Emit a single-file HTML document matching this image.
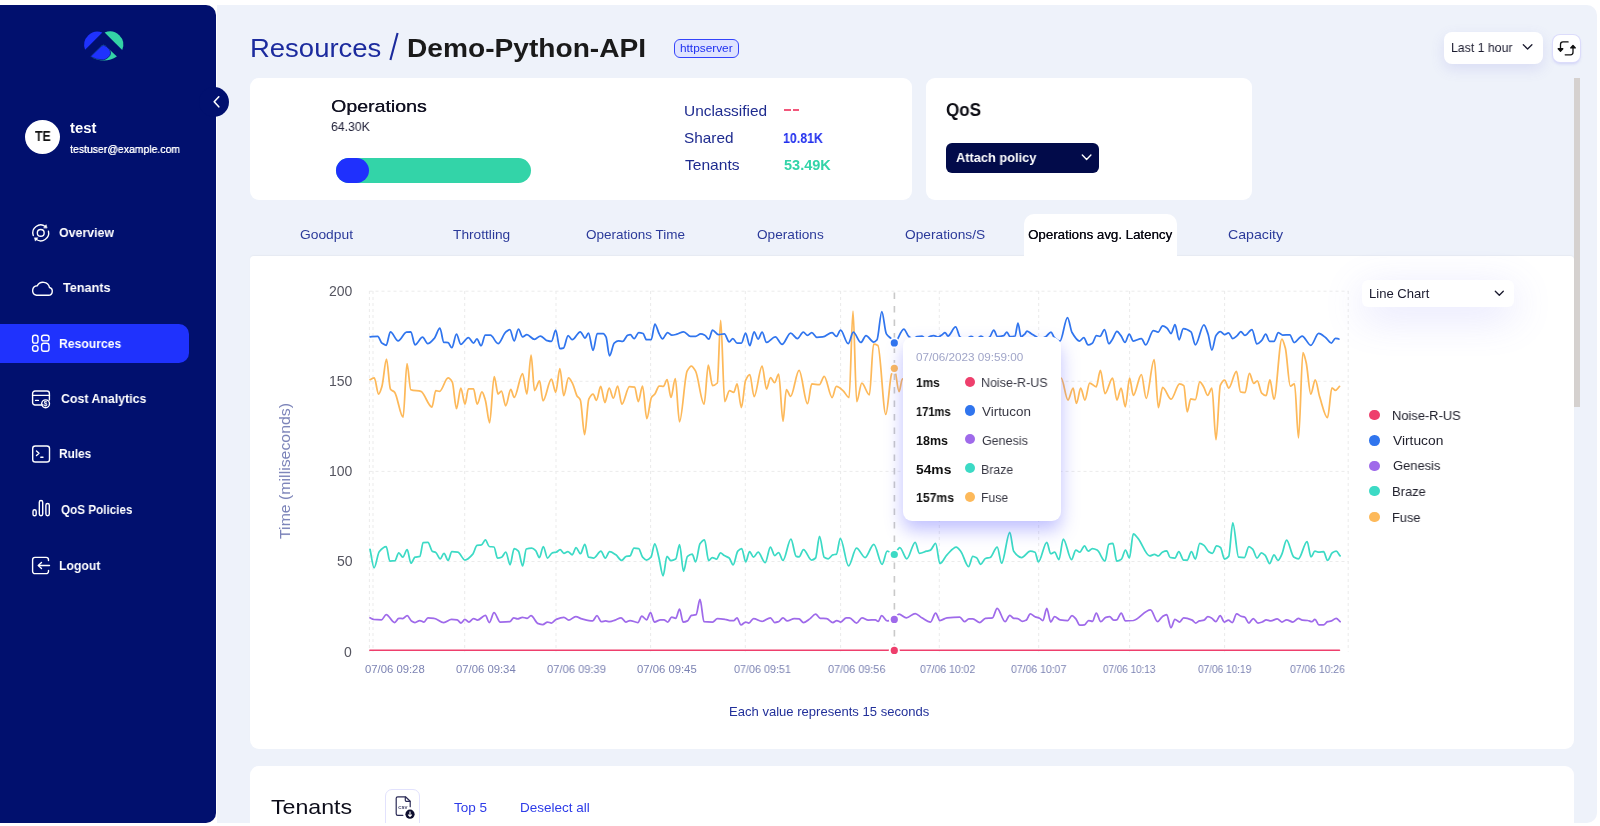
<!DOCTYPE html>
<html><head><meta charset="utf-8">
<style>
html,body{margin:0;padding:0;width:1600px;height:826px;overflow:hidden;background:#fff;}
body{position:relative;font-family:"Liberation Sans", sans-serif;}
.t{position:absolute;white-space:nowrap;transform-origin:0 0;will-change:transform;}
.b{position:absolute;}
svg.b{overflow:visible;}
</style></head><body>
<div class="b" style="left:217.00px;top:5.00px;width:1380.00px;height:817.50px;background:#eef2fa;border-radius:0 10px 10px 0;"></div>
<div class="b" style="left:0.00px;top:5.00px;width:216.00px;height:817.50px;background:#01106e;border-radius:0 10px 10px 0;"></div>
<div class="b" style="left:199.00px;top:87.00px;width:30.00px;height:30.00px;background:#01106e;border-radius:50%;"></div>
<svg class="b" style="left:0;top:0" width="1600" height="826" viewBox="0 0 1600 826"><path d="M218.8,96.8 L214.2,101.8 L218.8,106.8" fill="none" stroke="#fff" stroke-width="1.6" stroke-linecap="round" stroke-linejoin="round"/></svg>
<svg class="b" style="left:0;top:0" width="1600" height="826" viewBox="0 0 1600 826"><path d="M85.1,49.7 A13.3,13.3 0 0 1 102.4,32.6 Z" fill="#1f32fd"/><path d="M104.6,32.6 A13.3,13.3 0 0 1 122.2,49.9 Z" fill="#34d3a6"/><path d="M90.6,56.6 L101.9,45.4 Q103.5,44 105.1,45.4 L116.9,56.6 A23.5,23.5 0 0 1 90.6,56.6 Z" fill="#34d3a6"/><path d="M90.6,56.6 L101.3,46.2 Q103.5,44.2 106.3,46.4 L109.3,49.4 Q112.2,53.6 108.3,57.3 Q105.8,59.6 103.2,59.9 A23.5,23.5 0 0 1 90.6,56.6 Z" fill="#1f32fd" stroke="#01106e" stroke-width="0.7"/></svg>
<div class="b" style="left:25.00px;top:119.80px;width:35.00px;height:34.20px;background:#fff;border-radius:50%;"></div>
<span class="t" style="left:35.08px;top:129.00px;font-size:14.50px;line-height:14.50px;font-weight:bold;color:#111;transform:scaleX(0.8523);">TE</span>
<span class="t" style="left:69.75px;top:121.00px;font-size:14.00px;line-height:14.00px;font-weight:bold;color:#fff;transform:scaleX(1.0593);">test</span>
<span class="t" style="left:69.90px;top:144.00px;font-size:11.00px;line-height:11.00px;font-weight:normal;color:#fff;transform:scaleX(0.9500);text-shadow:0.25px 0 0 #fff;">testuser@example.com</span>
<div class="b" style="left:0.00px;top:324.00px;width:188.60px;height:38.50px;background:#1f32fd;border-radius:0 10px 10px 0;"></div>
<span class="t" style="left:58.90px;top:226.00px;font-size:13.50px;line-height:13.50px;font-weight:bold;color:#fff;transform:scaleX(0.9171);">Overview</span>
<span class="t" style="left:62.97px;top:281.00px;font-size:13.50px;line-height:13.50px;font-weight:bold;color:#fff;transform:scaleX(0.9364);">Tenants</span>
<span class="t" style="left:58.55px;top:337.00px;font-size:13.50px;line-height:13.50px;font-weight:bold;color:#fff;transform:scaleX(0.9019);">Resources</span>
<span class="t" style="left:60.81px;top:392.00px;font-size:13.50px;line-height:13.50px;font-weight:bold;color:#fff;transform:scaleX(0.9154);">Cost Analytics</span>
<span class="t" style="left:58.67px;top:447.00px;font-size:13.50px;line-height:13.50px;font-weight:bold;color:#fff;transform:scaleX(0.8764);">Rules</span>
<span class="t" style="left:61.03px;top:503.00px;font-size:13.50px;line-height:13.50px;font-weight:bold;color:#fff;transform:scaleX(0.8658);">QoS Policies</span>
<span class="t" style="left:58.65px;top:559.00px;font-size:13.50px;line-height:13.50px;font-weight:bold;color:#fff;transform:scaleX(0.9046);">Logout</span>
<svg class="b" style="left:0;top:0" width="1600" height="826" viewBox="0 0 1600 826">
<g fill="none" stroke="#fff" stroke-width="1.4" stroke-linecap="round" stroke-linejoin="round">
 <!-- overview -->
 <circle cx="40.75" cy="232.9" r="3.4"/>
 <path d="M33.28,235.47 A7.9,7.9 0 0 1 45.39,226.51"/>
 <path d="M48.45,231.12 A7.9,7.9 0 0 1 36.11,239.29"/>
 <path d="M47.01,227.68 L46.11,224.68 L43.87,227.75 Z" fill="#fff" stroke-width="0.6"/>
 <path d="M34.49,238.12 L35.39,241.12 L37.63,238.05 Z" fill="#fff" stroke-width="0.6"/>
 <!-- cloud -->
 <path d="M36.5,295.3 H48.5 A4,4 0 0 0 49.5,287.5 A6.6,6.6 0 0 0 37.2,285.8 A4.8,4.8 0 0 0 36.5,295.3 Z"/>
 <!-- resources -->
 <rect x="32.6" y="335.3" width="5.4" height="7.8" rx="2.2"/>
 <rect x="41.6" y="335.3" width="7.4" height="5.6" rx="2.2"/>
 <rect x="32.6" y="345.6" width="5.4" height="5.6" rx="2.2"/>
 <rect x="41.6" y="343.3" width="7.4" height="7.9" rx="2.2"/>
 <!-- cost -->
 <path d="M43,405 H35 A2.4,2.4 0 0 1 32.6,402.6 V393.4 A2.4,2.4 0 0 1 35,391 H47 A2.4,2.4 0 0 1 49.4,393.4 V400"/>
 <path d="M32.6,395.4 H49.4"/>
 <path d="M35.6,400.4 H38.4"/>
 <circle cx="45.6" cy="403.8" r="3.9"/>
 <!-- rules -->
 <rect x="32.7" y="446" width="16.8" height="16" rx="2.6"/>
 <path d="M36.5,451 L39,453.3 L36.5,455.6"/>
 <path d="M40.8,457.3 H43"/>
 <!-- qos -->
 <rect x="33" y="509.8" width="3.2" height="6" rx="1.6"/>
 <rect x="39.3" y="500.5" width="3.4" height="15.3" rx="1.7"/>
 <rect x="45.9" y="503.5" width="3.4" height="12.3" rx="1.7"/>
 <!-- logout -->
 <path d="M48.5,560.5 V559.8 A2.4,2.4 0 0 0 46.1,557.4 H35 A2.4,2.4 0 0 0 32.6,559.8 V571.2 A2.4,2.4 0 0 0 35,573.6 H46.1 A2.4,2.4 0 0 0 48.5,571.2 V570.5"/>
 <path d="M49.5,565.5 H38.5"/>
 <path d="M41.5,562.5 L38.3,565.5 L41.5,568.5"/>
</g>
<text x="45.6" y="406.3" font-family="Liberation Sans" font-size="6.5" font-weight="bold" fill="#fff" text-anchor="middle">$</text>
</svg>
<span class="t" style="left:250.30px;top:35.00px;font-size:26.00px;line-height:26.00px;font-weight:normal;color:#1c2b9e;transform:scaleX(1.0567);">Resources</span>
<svg class="b" style="left:0;top:0" width="1600" height="826" viewBox="0 0 1600 826"><path d="M397.6,33 L390.4,60" stroke="#1b2a9c" stroke-width="2.1" stroke-linecap="butt"/></svg>
<span class="t" style="left:407.03px;top:36.00px;font-size:25.20px;line-height:25.20px;font-weight:bold;color:#1a1a1a;transform:scaleX(1.1169);">Demo-Python-API</span>
<div class="b" style="left:673.90px;top:38.80px;width:65.00px;height:19.20px;background:#dfe3fe;border:1px solid #3444fb;border-radius:6px;box-sizing:border-box;"></div>
<span class="t" style="left:680.37px;top:43.00px;font-size:11.00px;line-height:11.00px;font-weight:normal;color:#1f30f0;transform:scaleX(1.0759);">httpserver</span>
<div class="b" style="left:1444.00px;top:32.00px;width:99.00px;height:32.00px;background:#fff;border-radius:8px;box-shadow:0 5px 14px rgba(110,110,220,0.16);"></div>
<span class="t" style="left:1450.62px;top:42.00px;font-size:12.80px;line-height:12.80px;font-weight:normal;color:#1a1a2e;transform:scaleX(0.9595);">Last 1 hour</span>
<svg class="b" style="left:0;top:0" width="1600" height="826" viewBox="0 0 1600 826"><path d="M1523.3,44.8 L1527.6,49 L1531.9,44.8" fill="none" stroke="#1a1a2e" stroke-width="1.3" stroke-linecap="round" stroke-linejoin="round"/></svg>
<div class="b" style="left:1553.00px;top:35.00px;width:27.00px;height:27.00px;background:#fff;border-radius:7px;box-shadow:0 0 0 1px #dcdcfb, 0 2px 3px rgba(110,110,240,0.25);"></div>
<svg class="b" style="left:0;top:0" width="1600" height="826" viewBox="0 0 1600 826"><g fill="none" stroke="#111" stroke-width="1.3" stroke-linecap="round" stroke-linejoin="round"><path d="M1568.1,41.9 H1563 Q1560.5,41.9 1560.5,44.4 V50.3"/><path d="M1558.2,48.7 L1560.5,51.2 L1562.8,48.7 Z" fill="#111"/><path d="M1565.2,54.8 H1570.5 Q1573,54.8 1573,52.3 V46.4"/><path d="M1570.7,47.9 L1573,45.4 L1575.3,47.9 Z" fill="#111"/></g></svg>
<div class="b" style="left:1574.00px;top:77.60px;width:6.10px;height:329.00px;background:#d5d1cf;"></div>
<div class="b" style="left:250.00px;top:77.50px;width:661.80px;height:122.00px;background:#fff;border-radius:9px;"></div>
<div class="b" style="left:925.50px;top:77.50px;width:326.50px;height:122.00px;background:#fff;border-radius:9px;"></div>
<span class="t" style="left:331.02px;top:99.00px;font-size:16.60px;line-height:16.60px;font-weight:normal;color:#111122;transform:scaleX(1.1773);text-shadow:0.3px 0 0 #111122;">Operations</span>
<span class="t" style="left:331.39px;top:120.00px;font-size:13.00px;line-height:13.00px;font-weight:normal;color:#22223a;transform:scaleX(0.9429);">64.30K</span>
<div class="b" style="left:336.00px;top:157.50px;width:195.00px;height:25.00px;background:#33d4a8;border-radius:13px;"></div>
<div class="b" style="left:336.00px;top:157.50px;width:33.00px;height:25.00px;background:#1f30fd;border-radius:13px;"></div>
<span class="t" style="left:683.77px;top:104.00px;font-size:14.20px;line-height:14.20px;font-weight:normal;color:#1e2b8f;transform:scaleX(1.0859);">Unclassified</span>
<span class="t" style="left:684.23px;top:131.00px;font-size:14.20px;line-height:14.20px;font-weight:normal;color:#1e2b8f;transform:scaleX(1.0824);">Shared</span>
<span class="t" style="left:684.69px;top:158.00px;font-size:14.20px;line-height:14.20px;font-weight:normal;color:#1e2b8f;transform:scaleX(1.0982);">Tenants</span>
<div class="b" style="left:784.00px;top:109.30px;width:6.60px;height:1.80px;background:#f2577b;"></div>
<div class="b" style="left:792.60px;top:109.30px;width:6.20px;height:1.80px;background:#f2577b;"></div>
<span class="t" style="left:783.26px;top:131.00px;font-size:14.50px;line-height:14.50px;font-weight:bold;color:#2230ee;transform:scaleX(0.8539);">10.81K</span>
<span class="t" style="left:783.57px;top:158.00px;font-size:14.50px;line-height:14.50px;font-weight:bold;color:#33d4a8;">53.49K</span>
<span class="t" style="left:945.52px;top:102.00px;font-size:17.50px;line-height:17.50px;font-weight:bold;color:#0d0d14;transform:scaleX(0.9755);">QoS</span>
<div class="b" style="left:946.00px;top:142.50px;width:153.00px;height:30.00px;background:#020b4a;border-radius:6px;"></div>
<span class="t" style="left:955.94px;top:151.00px;font-size:13.50px;line-height:13.50px;font-weight:bold;color:#fff;transform:scaleX(0.9481);">Attach policy</span>
<svg class="b" style="left:0;top:0" width="1600" height="826" viewBox="0 0 1600 826"><path d="M1082.3,155.1 L1086.6,159.4 L1090.9,155.1" fill="none" stroke="#fff" stroke-width="1.4" stroke-linecap="round" stroke-linejoin="round"/></svg>
<div class="b" style="left:1024.00px;top:213.50px;width:153.00px;height:46.50px;background:#fff;border-radius:10px 10px 0 0;z-index:1;"></div>
<span class="t" style="left:299.61px;top:229.00px;font-size:12.80px;line-height:12.80px;font-weight:normal;color:#2b3a9a;transform:scaleX(1.0789);">Goodput</span>
<span class="t" style="left:453.13px;top:229.00px;font-size:12.80px;line-height:12.80px;font-weight:normal;color:#2b3a9a;transform:scaleX(1.0723);">Throttling</span>
<span class="t" style="left:586.22px;top:229.00px;font-size:12.80px;line-height:12.80px;font-weight:normal;color:#2b3a9a;transform:scaleX(1.0553);">Operations Time</span>
<span class="t" style="left:757.32px;top:229.00px;font-size:12.80px;line-height:12.80px;font-weight:normal;color:#2b3a9a;transform:scaleX(1.0655);">Operations</span>
<span class="t" style="left:905.31px;top:229.00px;font-size:12.80px;line-height:12.80px;font-weight:normal;color:#2b3a9a;transform:scaleX(1.0739);">Operations/S</span>
<span class="t" style="left:1227.69px;top:229.00px;font-size:12.80px;line-height:12.80px;font-weight:normal;color:#2b3a9a;transform:scaleX(1.1068);">Capacity</span>
<span class="t" style="left:1028.34px;top:229.00px;font-size:12.80px;line-height:12.80px;font-weight:normal;color:#0a0a14;transform:scaleX(1.0390);text-shadow:0.25px 0 0 #0a0a14;z-index:2;">Operations avg. Latency</span>
<div class="b" style="left:250.00px;top:255.80px;width:1323.60px;height:493.20px;background:#fff;border-radius:4px 4px 9px 9px;box-shadow:0 -1px 1.5px rgba(0,0,0,0.035);"></div>
<svg class="b" style="left:0;top:0" width="1600" height="826" viewBox="0 0 1600 826"><g stroke="#ebebeb" stroke-width="1" stroke-dasharray="3,3" fill="none"><path d="M369.5,291.2 H1348.5"/><path d="M369.5,381.3 H1348.5"/><path d="M369.5,471.4 H1348.5"/><path d="M369.5,561.5 H1348.5"/><path d="M369.4,291 V651.6"/><path d="M373.0,291 V651.6"/><path d="M464.7,291 V651.6"/><path d="M556.0,291 V651.6"/><path d="M650.6,291 V651.6"/><path d="M745.3,291 V651.6"/><path d="M840.6,291 V651.6"/><path d="M939.3,291 V651.6"/><path d="M1038.7,291 V651.6"/><path d="M1129.6,291 V651.6"/><path d="M1224.6,291 V651.6"/><path d="M1348.2,291 V651.6"/></g><g fill="none" stroke-width="1.75" stroke-linejoin="round" stroke-linecap="round"><path d="M370.0,617.8C371.2,618.3 372.4,619.2 373.7,619.4C376.3,619.7 378.9,619.8 381.5,619.8C383.1,619.8 384.7,614.6 386.2,614.6C389.0,614.6 391.8,622.5 394.6,622.5C396.0,622.5 397.4,618.3 398.8,618.3C400.1,618.3 401.5,618.6 402.8,618.6C404.2,618.6 405.7,615.7 407.2,615.7C408.6,615.7 410.0,620.0 411.4,620.9C412.6,621.7 413.8,622.5 415.0,622.5C416.6,622.5 418.2,620.5 419.8,620.5C421.2,620.5 422.6,622.0 424.0,622.0C425.3,622.0 426.6,617.8 427.9,617.8C430.0,617.8 432.1,618.0 434.2,618.3C437.4,618.6 440.5,622.5 443.7,622.5C446.3,622.5 448.9,619.4 451.5,619.4C453.4,619.4 455.2,619.5 457.1,619.8C458.4,620.0 459.7,623.0 461.0,623.0C462.3,623.0 463.6,619.4 464.9,619.4C466.2,619.4 467.5,622.0 468.9,622.0C470.4,622.0 472.0,618.6 473.6,618.6C474.9,618.6 476.2,620.1 477.5,620.1C480.1,620.1 482.8,615.4 485.4,615.4C486.7,615.4 488.0,622.5 489.3,622.5C490.9,622.5 492.5,612.6 494.0,612.6C496.1,612.6 498.2,622.0 500.3,622.0C503.5,622.0 506.6,622.0 509.8,621.7C511.1,621.6 512.4,617.8 513.7,617.8C515.0,617.8 516.3,618.9 517.6,618.9C519.2,618.9 520.8,617.3 522.4,617.3C523.9,617.3 525.5,618.3 527.1,618.3C528.4,618.3 529.7,615.7 531.0,615.7C533.4,615.7 535.7,622.8 538.1,623.6C539.7,624.1 541.2,624.6 542.8,624.6C544.4,624.6 546.0,622.0 547.5,622.0C548.8,622.0 550.2,623.0 551.5,623.0C553.0,623.0 554.6,620.0 556.2,619.4C558.8,618.3 561.4,617.3 563.9,617.3C565.5,617.3 567.1,620.1 568.7,620.1C571.0,620.1 573.4,616.7 575.7,616.7C577.8,616.7 579.9,618.4 582.0,618.9C585.6,619.8 589.2,620.9 592.7,620.9C594.1,620.9 595.6,615.7 597.0,615.7C598.4,615.7 599.8,621.7 601.2,621.7C602.7,621.7 604.2,620.9 605.6,620.9C606.9,620.9 608.3,621.7 609.6,621.7C611.4,621.7 613.2,620.8 615.1,620.1C617.1,619.5 619.1,617.8 621.1,617.8C622.6,617.8 624.2,622.0 625.8,622.0C627.2,622.0 628.6,620.5 630.0,620.5C632.6,620.5 635.3,622.5 637.9,622.5C639.2,622.5 640.5,616.2 641.8,616.2C643.4,616.2 645.0,619.8 646.5,619.8C647.9,619.8 649.2,612.6 650.5,612.6C651.8,612.6 653.1,622.0 654.4,622.0C656.5,622.0 658.6,619.8 660.7,619.8C661.8,619.8 662.8,619.8 663.9,619.8C665.2,619.8 666.5,622.0 667.8,622.0C669.1,622.0 670.4,617.0 671.7,617.0C673.0,617.0 674.3,618.3 675.7,618.3C677.0,618.3 678.3,609.1 679.6,609.1C680.7,609.1 681.9,622.0 683.1,622.0C684.5,622.0 686.0,621.6 687.5,620.9C688.8,620.4 690.1,615.8 691.4,615.4C693.0,614.9 694.5,615.2 696.1,614.6C697.4,614.2 698.7,599.4 700.0,599.4C701.4,599.4 702.7,621.6 704.0,621.7C706.9,622.0 709.8,622.0 712.6,622.0C714.2,622.0 715.8,618.6 717.4,618.6C720.0,618.6 722.6,619.0 725.2,619.4C726.8,619.6 728.4,620.5 729.9,620.5C731.3,620.5 732.6,620.5 733.9,620.5C734.9,620.5 736.0,617.8 737.0,617.8C738.3,617.8 739.6,624.9 741.0,624.9C742.5,624.9 744.1,622.0 745.7,622.0C746.7,622.0 747.8,623.0 748.8,623.0C750.4,623.0 752.0,618.6 753.5,618.6C756.4,618.6 759.2,621.4 762.1,621.4C764.9,621.4 767.6,617.8 770.4,617.8C771.8,617.8 773.3,622.5 774.7,622.5C776.0,622.5 777.3,622.1 778.6,621.7C780.1,621.2 781.5,617.8 783.0,617.8C784.4,617.8 785.8,620.9 787.3,620.9C789.6,620.9 792.0,618.6 794.3,618.6C795.9,618.6 797.5,618.7 799.1,618.9C800.5,619.1 802.0,622.5 803.5,622.5C805.7,622.5 807.9,620.1 810.1,618.6C811.9,617.3 813.7,614.2 815.6,614.2C817.2,614.2 818.7,618.1 820.3,618.3C822.4,618.5 824.5,618.4 826.6,618.6C828.7,618.8 830.8,622.5 832.9,622.5C834.2,622.5 835.5,620.5 836.8,620.5C838.1,620.5 839.4,622.0 840.8,622.0C842.6,622.0 844.4,617.8 846.3,617.8C847.3,617.8 848.4,617.8 849.4,617.8C851.8,617.8 854.1,623.0 856.5,623.0C858.3,623.0 860.2,617.8 862.0,617.8C864.1,617.8 866.2,620.1 868.3,620.1C870.7,620.1 873.0,619.8 875.4,619.8C876.3,619.8 877.2,621.4 878.1,621.4C879.3,621.4 880.5,615.7 881.7,615.7C883.5,615.7 885.3,620.9 887.2,620.9C889.4,620.9 891.7,620.2 893.9,619.4C895.6,618.7 897.3,614.2 899.0,614.2C901.4,614.2 903.9,617.8 906.4,617.8C909.3,617.8 912.3,613.5 915.2,613.5C917.4,613.5 919.6,616.6 921.8,617.8C924.7,619.4 927.6,622.0 930.5,622.0C932.2,622.0 933.9,613.1 935.6,613.1C937.1,613.1 938.5,620.5 939.9,620.5C942.3,620.5 944.6,618.1 947.0,617.8C951.2,617.3 955.5,617.0 959.8,617.0C961.3,617.0 962.9,621.7 964.5,621.7C965.9,621.7 967.4,618.9 968.9,618.9C970.2,618.9 971.5,618.9 972.8,618.9C975.2,618.9 977.5,622.5 979.9,622.5C981.7,622.5 983.6,618.5 985.4,618.3C987.8,618.0 990.1,618.1 992.5,617.8C994.1,617.6 995.6,608.3 997.2,608.3C999.8,608.3 1002.5,621.7 1005.1,621.7C1006.6,621.7 1008.2,615.4 1009.8,615.4C1011.1,615.4 1012.4,618.1 1013.7,618.3C1015.0,618.5 1016.4,618.4 1017.7,618.6C1019.2,618.8 1020.8,621.4 1022.4,621.4C1023.7,621.4 1025.0,620.8 1026.3,620.1C1027.6,619.5 1028.9,613.9 1030.3,613.9C1031.8,613.9 1033.4,616.0 1035.0,616.7C1036.5,617.4 1038.1,617.5 1039.7,618.3C1040.7,618.7 1041.8,620.5 1042.8,620.5C1044.2,620.5 1045.5,608.3 1046.8,608.3C1048.1,608.3 1049.4,622.0 1050.7,622.0C1052.0,622.0 1053.3,616.7 1054.6,616.7C1056.5,616.7 1058.3,619.6 1060.1,619.8C1062.7,620.2 1065.2,620.5 1067.7,620.5C1069.1,620.5 1070.5,615.7 1072.0,615.7C1073.3,615.7 1074.6,617.5 1075.9,618.9C1077.2,620.3 1078.5,625.2 1079.8,625.2C1081.4,625.2 1083.0,625.1 1084.5,624.9C1085.9,624.7 1087.2,620.5 1088.5,620.5C1089.8,620.5 1091.1,621.4 1092.4,621.4C1093.7,621.4 1095.0,613.1 1096.3,613.1C1097.8,613.1 1099.3,621.7 1100.7,621.7C1102.4,621.7 1104.1,617.8 1105.8,617.3C1107.1,617.0 1108.4,616.7 1109.7,616.7C1111.0,616.7 1112.3,620.1 1113.7,620.1C1114.7,620.1 1115.7,620.0 1116.8,619.8C1118.3,619.6 1119.7,613.1 1121.2,613.1C1122.6,613.1 1124.0,620.9 1125.5,620.9C1128.1,620.9 1130.7,620.7 1133.3,620.5C1139.0,619.9 1144.8,609.9 1150.5,609.9C1152.9,609.9 1155.2,621.7 1157.6,621.7C1159.2,621.7 1160.7,617.7 1162.3,616.7C1163.8,615.7 1165.2,614.6 1166.7,614.6C1168.1,614.6 1169.5,627.7 1171.0,627.7C1172.3,627.7 1173.6,619.4 1174.9,619.4C1176.5,619.4 1178.0,622.0 1179.6,622.0C1180.9,622.0 1182.2,617.8 1183.6,617.8C1186.4,617.8 1189.3,618.9 1192.2,620.1C1193.4,620.7 1194.5,623.0 1195.7,623.0C1196.9,623.0 1198.1,621.3 1199.3,620.9C1200.9,620.5 1202.4,620.6 1204.0,620.1C1205.3,619.8 1206.6,616.7 1207.9,616.7C1209.3,616.7 1210.6,617.5 1211.9,618.3C1213.2,619.0 1214.5,621.7 1215.8,621.7C1217.3,621.7 1218.7,615.7 1220.2,615.7C1221.6,615.7 1223.0,622.0 1224.5,622.0C1225.8,622.0 1227.1,620.1 1228.4,620.1C1229.7,620.1 1231.0,622.5 1232.3,622.5C1233.7,622.5 1235.2,613.9 1236.6,613.9C1238.1,613.9 1239.5,615.7 1241.0,616.2C1242.3,616.7 1243.6,616.7 1244.9,617.3C1246.2,617.9 1247.5,623.0 1248.9,623.0C1250.3,623.0 1251.8,618.6 1253.3,618.6C1254.8,618.6 1256.4,623.0 1258.0,623.0C1259.4,623.0 1260.8,622.5 1262.2,622.0C1263.5,621.6 1264.9,619.8 1266.2,619.8C1267.7,619.8 1269.3,620.9 1270.9,620.9C1273.0,620.9 1275.1,618.9 1277.2,618.9C1278.8,618.9 1280.3,622.0 1281.9,622.0C1283.5,622.0 1285.0,619.8 1286.6,619.8C1288.7,619.8 1290.8,622.0 1292.9,622.0C1294.8,622.0 1296.6,618.3 1298.4,618.3C1299.7,618.3 1301.0,620.0 1302.4,620.1C1304.2,620.3 1306.0,620.3 1307.9,620.5C1309.2,620.6 1310.5,621.7 1311.8,621.7C1312.8,621.7 1313.9,619.4 1314.9,619.4C1316.3,619.4 1317.6,624.9 1318.9,624.9C1320.5,624.9 1322.0,624.9 1323.6,624.9C1324.9,624.9 1326.2,622.1 1327.5,621.7C1328.8,621.3 1330.2,621.3 1331.5,620.9C1333.0,620.5 1334.6,618.3 1336.2,618.3C1337.5,618.3 1338.8,620.6 1340.1,621.7" stroke="#9f6aea"/><path d="M370.0,549.3C371.4,555.5 372.8,567.9 374.1,567.9C375.8,567.9 377.5,553.8 379.2,551.7C381.5,548.8 383.9,546.5 386.2,546.5C387.4,546.5 388.7,561.1 389.9,561.1C391.5,561.1 393.2,561.0 394.9,560.7C396.2,560.4 397.5,552.8 398.8,552.8C400.1,552.8 401.5,557.2 402.8,557.2C404.2,557.2 405.7,549.7 407.2,549.7C408.4,549.7 409.7,563.2 410.9,563.2C412.3,563.2 413.7,557.6 415.0,557.2C416.6,556.7 418.2,556.9 419.8,556.4C420.9,556.0 422.1,543.0 423.2,542.7C424.8,542.4 426.4,542.3 427.9,542.3C429.4,542.3 430.9,550.3 432.3,551.2C433.5,551.9 434.7,551.8 435.8,552.5C437.3,553.3 438.7,558.8 440.2,558.8C441.5,558.8 442.7,553.3 444.0,553.3C445.4,553.3 446.7,560.4 448.1,560.4C449.3,560.4 450.6,551.7 451.9,551.7C453.9,551.7 455.8,551.9 457.8,552.2C460.2,552.5 462.6,560.0 464.9,560.0C467.5,560.0 470.2,557.1 472.8,554.1C474.2,552.4 475.6,545.7 477.0,545.4C478.5,545.1 480.0,545.2 481.4,544.9C482.8,544.7 484.1,539.9 485.4,539.9C486.7,539.9 488.0,546.3 489.3,546.5C490.9,546.8 492.5,546.7 494.0,547.0C495.2,547.2 496.3,558.0 497.5,558.0C498.9,558.0 500.2,557.7 501.6,557.2C503.0,556.7 504.4,552.2 505.8,552.2C507.3,552.2 508.7,564.8 510.1,564.8C511.4,564.8 512.8,548.6 514.2,548.6C515.6,548.6 517.0,549.7 518.4,551.2C519.8,552.7 521.3,565.9 522.7,565.9C523.9,565.9 525.1,549.5 526.3,549.0C528.1,548.4 530.0,548.1 531.8,548.1C533.1,548.1 534.4,549.3 535.7,550.6C536.9,551.8 538.1,557.5 539.4,557.5C540.7,557.5 542.0,546.5 543.3,546.5C544.7,546.5 546.1,558.0 547.5,558.0C549.1,558.0 550.7,553.2 552.3,552.8C553.6,552.4 554.9,552.5 556.2,552.2C557.5,551.8 558.8,549.7 560.1,549.7C561.4,549.7 562.7,553.3 563.9,553.3C565.2,553.3 566.6,551.7 567.9,551.7C569.3,551.7 570.8,554.8 572.3,554.8C573.5,554.8 574.8,547.5 576.1,547.5C577.5,547.5 579.0,553.7 580.5,553.7C581.9,553.7 583.4,544.3 584.9,544.3C586.1,544.3 587.4,556.8 588.6,557.2C590.4,557.7 592.1,558.0 593.8,558.0C596.2,558.0 598.6,551.2 600.9,551.2C602.4,551.2 603.8,558.0 605.3,558.0C606.7,558.0 608.2,551.7 609.6,551.7C611.7,551.7 613.8,553.5 615.9,554.8C617.8,556.1 619.7,560.4 621.7,560.4C623.2,560.4 624.6,556.7 626.1,556.4C627.4,556.1 628.7,556.2 630.0,555.9C631.3,555.7 632.6,548.1 634.0,548.1C635.5,548.1 637.1,548.2 638.7,548.6C640.0,548.8 641.3,555.8 642.6,557.2C643.9,558.6 645.2,560.0 646.5,560.0C648.0,560.0 649.5,558.8 651.0,557.2C652.2,555.8 653.5,543.8 654.7,543.8C656.1,543.8 657.5,552.1 658.8,557.2C660.2,562.5 661.7,575.8 663.1,575.8C664.4,575.8 665.7,556.4 667.0,556.4C668.3,556.4 669.6,560.7 670.9,560.7C672.5,560.7 674.1,560.1 675.7,559.1C677.0,558.3 678.3,544.6 679.6,544.6C680.9,544.6 682.2,571.4 683.5,571.4C684.8,571.4 686.1,557.6 687.5,556.4C689.0,555.0 690.6,554.1 692.2,554.1C693.3,554.1 694.5,561.9 695.6,561.9C697.1,561.9 698.6,546.0 700.0,543.8C701.5,541.7 703.0,539.9 704.5,539.9C705.9,539.9 707.3,560.7 708.7,560.7C709.9,560.7 711.1,557.5 712.3,557.5C713.7,557.5 715.2,559.1 716.6,559.1C717.9,559.1 719.2,552.8 720.5,552.8C721.8,552.8 723.1,554.9 724.4,555.6C726.0,556.6 727.6,556.8 729.2,558.0C730.5,559.0 731.8,564.8 733.1,564.8C734.7,564.8 736.2,552.9 737.8,551.2C739.1,549.8 740.4,548.6 741.7,548.6C743.1,548.6 744.4,561.9 745.7,561.9C747.0,561.9 748.3,551.7 749.6,551.7C750.9,551.7 752.2,557.2 753.5,557.2C755.1,557.2 756.6,552.2 758.1,552.2C760.5,552.2 762.9,562.7 765.2,562.7C767.0,562.7 768.7,547.0 770.4,547.0C771.8,547.0 773.3,555.6 774.7,555.6C776.0,555.6 777.3,552.5 778.6,552.5C780.1,552.5 781.5,560.4 783.0,560.4C785.6,560.4 788.3,539.1 790.9,539.1C792.7,539.1 794.4,555.9 796.2,556.4C797.2,556.7 798.1,556.9 799.1,556.9C800.5,556.9 802.0,549.7 803.5,549.7C806.2,549.7 808.9,560.0 811.6,560.0C813.0,560.0 814.3,559.2 815.6,558.0C816.9,556.7 818.2,536.4 819.5,536.4C821.1,536.4 822.7,556.1 824.2,557.2C825.5,558.1 826.9,558.8 828.2,558.8C829.7,558.8 831.3,555.4 832.9,554.8C834.1,554.4 835.3,554.6 836.5,554.1C837.8,553.5 839.0,538.3 840.3,538.3C843.1,538.3 845.8,565.9 848.6,565.9C851.2,565.9 853.9,548.1 856.5,548.1C859.4,548.1 862.3,557.5 865.1,557.5C868.0,557.5 870.9,544.3 873.8,544.3C876.6,544.3 879.4,564.3 882.1,564.3C883.8,564.3 885.5,551.2 887.2,551.2C889.4,551.2 891.7,554.5 893.9,554.5C895.9,554.5 897.8,547.5 899.8,547.5C902.1,547.5 904.5,558.8 906.8,558.8C909.6,558.8 912.4,542.3 915.2,542.3C916.6,542.3 918.0,553.3 919.4,553.3C921.8,553.3 924.2,551.9 926.5,551.2C927.8,550.9 929.1,550.7 930.5,550.1C932.2,549.4 933.9,543.4 935.6,543.4C937.1,543.4 938.5,563.5 939.9,563.5C942.3,563.5 944.6,557.2 947.0,554.8C950.1,551.7 953.2,547.0 956.3,547.0C957.9,547.0 959.4,549.7 961.0,551.7C963.5,555.0 966.1,566.6 968.6,566.6C970.0,566.6 971.4,556.4 972.8,556.4C974.1,556.4 975.4,557.2 976.8,558.0C978.1,558.8 979.4,564.3 980.7,564.3C982.3,564.3 983.8,559.0 985.4,558.5C987.0,557.9 988.6,558.0 990.1,557.5C992.5,556.7 994.8,547.0 997.2,547.0C998.7,547.0 1000.1,563.2 1001.6,563.2C1004.3,563.2 1007.1,532.3 1009.8,532.3C1011.1,532.3 1012.4,549.3 1013.7,551.2C1016.4,555.1 1019.0,557.5 1021.6,557.5C1024.5,557.5 1027.4,551.2 1030.3,551.2C1031.8,551.2 1033.4,551.6 1035.0,552.2C1036.1,552.6 1037.3,561.9 1038.4,561.9C1041.2,561.9 1044.0,542.3 1046.8,542.3C1048.1,542.3 1049.4,553.7 1050.7,553.7C1052.0,553.7 1053.3,552.2 1054.6,552.2C1056.1,552.2 1057.5,559.6 1058.9,559.6C1060.4,559.6 1061.8,539.1 1063.3,539.1C1066.0,539.1 1068.8,559.6 1071.5,559.6C1072.9,559.6 1074.4,550.1 1075.9,550.1C1077.2,550.1 1078.5,552.2 1079.8,552.2C1081.4,552.2 1083.0,545.9 1084.5,545.9C1085.7,545.9 1087.0,551.2 1088.2,551.2C1089.6,551.2 1091.0,548.6 1092.4,548.6C1094.0,548.6 1095.6,549.3 1097.1,550.1C1099.8,551.5 1102.4,561.1 1105.0,561.1C1106.3,561.1 1107.6,544.9 1108.9,544.3C1110.2,543.7 1111.6,543.4 1112.9,543.4C1114.2,543.4 1115.5,561.1 1116.8,561.1C1118.4,561.1 1119.9,560.3 1121.5,559.1C1122.8,558.1 1124.1,550.1 1125.5,550.1C1126.8,550.1 1128.1,558.0 1129.4,558.0C1130.7,558.0 1132.0,533.9 1133.3,533.9C1134.9,533.9 1136.5,536.6 1138.0,538.3C1141.9,542.7 1145.8,555.9 1149.7,555.9C1151.3,555.9 1152.9,554.4 1154.4,554.4C1155.8,554.4 1157.1,555.9 1158.4,555.9C1159.7,555.9 1161.0,552.8 1162.3,552.2C1163.8,551.5 1165.2,550.9 1166.7,550.9C1167.9,550.9 1169.0,557.3 1170.2,557.5C1171.8,557.8 1173.3,558.0 1174.9,558.0C1176.2,558.0 1177.5,551.7 1178.8,551.7C1180.4,551.7 1182.0,560.0 1183.6,560.0C1184.8,560.0 1186.0,560.0 1187.2,560.0C1188.6,560.0 1190.0,551.7 1191.4,551.7C1192.7,551.7 1194.0,559.1 1195.4,559.1C1196.8,559.1 1198.3,543.4 1199.8,543.4C1201.2,543.4 1202.6,544.4 1204.0,545.4C1205.6,546.5 1207.2,550.7 1208.7,551.7C1209.9,552.5 1211.1,553.3 1212.3,553.3C1213.8,553.3 1215.2,545.9 1216.6,545.9C1217.9,545.9 1219.2,546.5 1220.5,547.5C1221.8,548.4 1223.2,559.1 1224.5,559.1C1225.9,559.1 1227.3,558.1 1228.7,556.4C1230.1,554.8 1231.4,522.9 1232.8,522.9C1234.7,522.9 1236.7,557.0 1238.6,557.2C1240.6,557.4 1242.5,557.5 1244.4,557.5C1245.9,557.5 1247.4,546.5 1248.9,546.5C1250.2,546.5 1251.5,548.0 1252.8,549.3C1254.2,550.8 1255.6,558.0 1257.0,558.0C1258.5,558.0 1260.0,552.8 1261.4,552.8C1262.8,552.8 1264.1,554.3 1265.4,555.6C1266.8,557.1 1268.2,563.5 1269.6,563.5C1271.1,563.5 1272.6,554.8 1274.0,554.8C1275.3,554.8 1276.7,560.4 1278.0,560.4C1279.3,560.4 1280.6,556.8 1281.9,554.1C1283.5,550.8 1285.0,540.2 1286.6,540.2C1289.0,540.2 1291.3,555.4 1293.7,556.9C1295.3,557.9 1296.8,558.8 1298.4,558.8C1301.3,558.8 1304.2,541.5 1307.1,541.5C1308.4,541.5 1309.7,556.9 1311.0,556.9C1312.3,556.9 1313.6,551.2 1314.9,551.2C1316.3,551.2 1317.6,552.2 1318.9,552.2C1320.5,552.2 1322.0,551.7 1323.6,551.7C1324.9,551.7 1326.2,560.4 1327.5,560.4C1329.1,560.4 1330.7,553.8 1332.3,552.8C1333.6,552.0 1334.9,551.2 1336.2,551.2C1337.5,551.2 1338.8,554.4 1340.1,555.9" stroke="#3cdac5"/><path d="M370.1,379.6C371.5,379.0 372.9,377.9 374.3,377.9C375.7,377.9 377.1,394.0 378.6,394.0C379.7,394.0 380.8,390.0 381.9,386.4C383.5,381.5 385.0,359.2 386.5,359.2C387.8,359.2 389.1,387.0 390.4,388.9C391.8,391.0 393.2,390.6 394.7,392.3C397.5,395.6 400.3,417.2 403.1,417.2C404.4,417.2 405.7,363.5 407.0,363.5C408.3,363.5 409.5,389.3 410.8,389.7C414.2,391.0 417.5,390.4 420.9,391.4C424.6,392.5 428.3,407.0 431.9,407.0C433.2,407.0 434.5,390.6 435.8,390.6C437.1,390.6 438.3,391.4 439.6,391.4C442.4,391.4 445.2,377.9 448.1,377.9C449.5,377.9 450.9,379.7 452.3,382.1C453.7,384.6 455.1,408.7 456.5,408.7C457.9,408.7 459.4,388.1 460.8,388.1C462.2,388.1 463.6,404.2 465.0,404.2C466.1,404.2 467.3,388.9 468.4,388.9C470.1,388.9 471.8,388.9 473.5,388.9C474.7,388.9 476.0,404.2 477.2,404.2C478.8,404.2 480.4,391.8 481.9,391.8C483.1,391.8 484.2,396.2 485.3,399.9C486.8,404.5 488.2,422.8 489.6,422.8C491.1,422.8 492.6,376.5 494.2,376.5C495.5,376.5 496.8,394.0 498.1,394.0C499.2,394.0 500.3,391.1 501.4,391.1C502.9,391.1 504.3,405.8 505.7,405.8C507.4,405.8 509.1,389.4 510.8,389.4C511.9,389.4 513.0,397.4 514.2,397.4C517.0,397.4 519.8,373.6 522.6,373.6C524.0,373.6 525.5,394.0 526.9,394.0C528.3,394.0 529.7,355.0 531.1,355.0C532.2,355.0 533.4,390.6 534.5,390.6C536.2,390.6 537.9,380.9 539.6,380.9C540.7,380.9 541.8,400.8 543.0,400.8C545.8,400.8 548.6,379.2 551.4,379.2C552.9,379.2 554.3,392.3 555.7,392.3C557.1,392.3 558.5,368.6 559.9,368.6C561.2,368.6 562.5,395.7 563.7,395.7C565.3,395.7 566.9,377.9 568.5,377.9C569.9,377.9 571.3,381.2 572.7,383.8C574.1,386.5 575.5,393.3 576.9,395.7C578.1,397.6 579.2,397.5 580.3,399.9C581.8,402.9 583.2,434.7 584.6,434.7C586.0,434.7 587.4,402.0 588.8,399.1C590.2,396.1 591.6,394.0 593.1,394.0C594.2,394.0 595.3,400.3 596.4,400.3C597.9,400.3 599.3,386.4 600.7,386.4C602.1,386.4 603.5,402.5 604.9,402.5C606.3,402.5 607.7,388.1 609.2,388.1C610.6,388.1 612.0,398.2 613.4,398.2C614.8,398.2 616.2,386.0 617.6,386.0C619.0,386.0 620.5,404.2 621.9,404.2C624.4,404.2 626.9,386.7 629.5,386.7C631.2,386.7 632.9,386.9 634.6,387.2C635.8,387.5 637.1,401.6 638.3,401.6C639.7,401.6 641.1,386.0 642.5,386.0C644.0,386.0 645.4,418.6 646.8,418.6C648.4,418.6 649.9,399.9 651.5,397.4C652.7,395.6 653.8,395.4 654.9,394.0C656.3,392.2 657.7,386.0 659.2,386.0C660.6,386.0 662.0,386.4 663.4,386.4C664.6,386.4 665.9,379.6 667.1,379.6C668.4,379.6 669.7,397.4 671.0,397.4C672.4,397.4 673.8,378.7 675.3,378.7C676.7,378.7 678.1,421.9 679.5,421.9C682.0,421.9 684.6,376.0 687.1,371.1C688.5,368.4 689.9,366.0 691.4,366.0C692.8,366.0 694.2,368.7 695.6,371.1C698.4,376.0 701.2,404.2 704.1,404.2C705.5,404.2 706.9,365.2 708.3,365.2C709.7,365.2 711.1,385.5 712.5,385.5C714.1,385.5 715.7,384.7 717.3,383.0C718.4,381.7 719.5,320.3 720.7,320.3C722.0,320.3 723.4,401.6 724.7,401.6C726.3,401.6 727.9,390.6 729.5,390.6C730.9,390.6 732.3,392.3 733.7,392.3C734.9,392.3 736.0,383.8 737.1,383.8C738.5,383.8 739.9,407.5 741.4,407.5C742.8,407.5 744.2,383.7 745.6,380.4C747.0,377.2 748.4,374.5 749.8,374.5C751.2,374.5 752.7,396.5 754.1,396.5C756.8,396.5 759.4,366.1 762.1,366.1C763.6,366.1 765.1,389.0 766.5,389.0C767.9,389.0 769.2,377.6 770.6,377.6C771.9,377.6 773.2,382.7 774.5,382.7C775.9,382.7 777.3,374.2 778.7,374.2C780.1,374.2 781.6,421.2 783.0,421.2C784.1,421.2 785.2,389.5 786.4,389.5C787.8,389.5 789.2,396.3 790.6,396.3C793.4,396.3 796.2,370.3 799.1,370.3C801.9,370.3 804.7,403.7 807.5,403.7C809.0,403.7 810.4,383.9 811.8,383.9C814.3,383.9 816.9,384.7 819.4,384.7C821.0,384.7 822.6,376.3 824.2,376.3C826.8,376.3 829.5,397.5 832.1,397.5C833.5,397.5 834.9,386.4 836.4,386.4C838.6,386.4 840.9,388.8 843.1,390.7C845.1,392.3 847.1,397.5 849.1,397.5C850.4,397.5 851.7,311.0 853.0,311.0C854.2,311.0 855.5,401.7 856.7,401.7C858.4,401.7 860.1,383.1 861.8,383.1C864.3,383.1 866.9,394.9 869.4,394.9C870.8,394.9 872.2,344.1 873.6,344.1C875.1,344.1 876.5,344.6 877.9,345.4C880.5,346.9 883.2,414.4 885.8,414.4C887.7,414.4 889.6,380.2 891.4,374.6C892.4,371.7 893.4,368.6 894.3,368.6C895.9,368.6 897.5,391.5 899.1,391.5C900.2,391.5 901.3,378.8 902.5,378.8C908.3,378.8 914.2,379.3 920.0,380.0C926.7,380.8 933.3,410.0 940.0,410.0C946.7,410.0 953.3,370.0 960.0,370.0C966.7,370.0 973.3,400.0 980.0,400.0C986.7,400.0 993.3,375.0 1000.0,375.0C1006.7,375.0 1013.3,395.0 1020.0,395.0C1026.7,395.0 1033.3,372.0 1040.0,372.0C1046.0,372.0 1052.0,380.0 1058.0,380.0C1059.1,380.0 1060.1,378.0 1061.2,378.0C1063.4,378.0 1065.7,400.0 1068.0,400.0C1069.7,400.0 1071.4,388.1 1073.1,388.1C1074.2,388.1 1075.3,403.4 1076.4,403.4C1077.9,403.4 1079.3,388.1 1080.7,388.1C1082.1,388.1 1083.5,400.0 1084.9,400.0C1086.5,400.0 1088.1,383.1 1089.7,383.1C1091.9,383.1 1094.0,386.8 1096.2,386.8C1097.6,386.8 1099.0,370.3 1100.4,370.3C1101.9,370.3 1103.5,393.6 1105.0,393.6C1107.5,393.6 1110.1,378.0 1112.6,378.0C1114.0,378.0 1115.5,400.0 1116.9,400.0C1118.3,400.0 1119.7,388.1 1121.1,388.1C1122.5,388.1 1123.9,406.8 1125.3,406.8C1126.8,406.8 1128.2,378.0 1129.6,378.0C1130.8,378.0 1132.1,395.3 1133.3,395.3C1136.0,395.3 1138.7,374.6 1141.4,374.6C1143.0,374.6 1144.6,398.3 1146.2,398.3C1148.8,398.3 1151.5,359.7 1154.2,359.7C1155.6,359.7 1157.0,407.6 1158.4,407.6C1159.8,407.6 1161.2,387.3 1162.6,387.3C1165.5,387.3 1168.3,399.2 1171.1,399.2C1173.9,399.2 1176.8,383.9 1179.6,383.9C1181.0,383.9 1182.4,384.5 1183.8,385.6C1184.9,386.5 1186.1,411.9 1187.2,411.9C1188.4,411.9 1189.6,398.9 1190.7,398.9C1192.3,398.9 1193.8,399.7 1195.3,399.7C1196.8,399.7 1198.3,381.9 1199.8,381.9C1201.1,381.9 1202.4,384.9 1203.7,386.9C1205.0,389.0 1206.3,395.3 1207.6,395.3C1209.1,395.3 1210.5,388.1 1211.9,388.1C1213.3,388.1 1214.6,439.7 1216.0,439.7C1217.4,439.7 1218.9,388.5 1220.3,385.4C1221.8,382.2 1223.2,380.2 1224.6,380.2C1226.0,380.2 1227.4,388.0 1228.8,388.0C1231.3,388.0 1233.9,371.4 1236.5,371.4C1237.8,371.4 1239.2,391.7 1240.6,392.0C1242.1,392.4 1243.6,392.5 1245.1,392.5C1246.5,392.5 1247.9,373.4 1249.4,373.4C1250.8,373.4 1252.3,383.4 1253.8,383.4C1254.9,383.4 1256.1,380.8 1257.3,380.8C1258.7,380.8 1260.2,391.6 1261.7,393.1C1263.1,394.5 1264.6,395.7 1266.1,395.7C1267.3,395.7 1268.6,379.9 1269.9,379.9C1271.3,379.9 1272.6,399.2 1274.0,399.2C1276.6,399.2 1279.2,339.0 1281.9,339.0C1283.0,339.0 1284.2,343.8 1285.4,348.3C1287.0,354.6 1288.7,386.1 1290.3,386.1C1291.7,386.1 1293.1,383.9 1294.5,383.9C1295.9,383.9 1297.2,437.9 1298.5,437.9C1300.0,437.9 1301.5,352.7 1302.9,352.7C1304.0,352.7 1305.0,358.0 1306.1,362.3C1307.7,368.8 1309.3,394.0 1310.8,394.0C1312.3,394.0 1313.8,379.9 1315.2,379.9C1316.7,379.9 1318.2,391.9 1319.6,396.6C1322.3,405.0 1324.9,417.7 1327.5,417.7C1329.0,417.7 1330.5,387.8 1331.9,387.8C1333.1,387.8 1334.3,390.4 1335.4,390.4C1336.8,390.4 1338.1,387.8 1339.5,386.4" stroke="#fdb95a"/><path d="M370.1,336.9C372.6,336.7 375.2,336.4 377.7,336.4C379.1,336.4 380.5,342.0 381.9,343.1C383.4,344.2 384.8,345.3 386.2,345.3C387.6,345.3 389.0,331.8 390.4,331.8C393.0,331.8 395.5,340.9 398.1,340.9C400.9,340.9 403.7,332.5 406.5,332.1C407.9,331.9 409.4,331.8 410.8,331.8C412.2,331.8 413.6,344.8 415.0,344.8C417.5,344.8 420.1,337.2 422.6,337.2C424.3,337.2 426.0,343.6 427.7,343.6C430.0,343.6 432.2,340.6 434.5,338.1C436.3,336.0 438.1,328.2 439.9,328.2C441.2,328.2 442.5,342.1 443.8,342.3C445.2,342.5 446.6,342.4 448.1,342.6C449.3,342.8 450.5,347.7 451.8,347.7C453.4,347.7 454.9,334.2 456.5,334.2C457.9,334.2 459.4,344.3 460.8,344.3C463.3,344.3 465.8,337.5 468.4,337.5C470.1,337.5 471.8,343.1 473.5,343.1C474.6,343.1 475.7,338.9 476.9,338.9C478.3,338.9 479.7,345.7 481.1,345.7C482.5,345.7 483.9,335.2 485.3,335.2C487.0,335.2 488.7,335.2 490.4,335.2C493.0,335.2 495.5,343.6 498.1,343.6C500.6,343.6 503.1,334.2 505.7,332.1C507.1,331.0 508.5,329.6 509.9,329.6C511.3,329.6 512.7,340.9 514.2,340.9C515.6,340.9 517.0,329.1 518.4,329.1C519.8,329.1 521.2,336.9 522.6,336.9C524.0,336.9 525.5,334.7 526.9,334.7C529.4,334.7 531.9,339.4 534.5,339.4C536.5,339.4 538.4,336.0 540.4,336.0C542.4,336.0 544.4,339.6 546.4,340.3C548.1,340.8 549.7,341.4 551.4,341.4C552.9,341.4 554.3,330.1 555.7,330.1C557.1,330.1 558.5,348.7 559.9,348.7C561.1,348.7 562.2,348.5 563.4,348.2C565.0,347.8 566.6,335.5 568.1,335.5C569.5,335.5 570.8,339.7 572.2,339.7C574.9,339.7 577.6,331.8 580.3,331.8C581.9,331.8 583.5,338.1 585.1,338.1C586.2,338.1 587.3,333.0 588.5,333.0C590.0,333.0 591.5,350.4 593.1,350.4C594.5,350.4 595.9,333.5 597.3,333.5C599.3,333.5 601.2,333.5 603.2,333.5C604.2,333.5 605.1,335.2 606.1,337.2C607.2,339.5 608.4,355.8 609.5,355.8C611.1,355.8 612.7,344.5 614.2,343.1C615.6,341.9 617.1,340.9 618.5,340.9C619.9,340.9 621.3,341.4 622.7,341.4C624.4,341.4 626.1,335.7 627.8,335.2C628.6,334.9 629.5,334.7 630.3,334.7C631.6,334.7 632.9,338.6 634.2,338.6C635.8,338.6 637.3,332.5 638.8,332.5C640.2,332.5 641.6,332.9 643.1,333.5C644.2,334.0 645.3,339.7 646.4,339.7C648.0,339.7 649.6,339.7 651.2,339.7C652.4,339.7 653.7,324.0 654.9,324.0C656.3,324.0 657.7,331.3 659.2,333.8C660.3,335.9 661.4,338.9 662.5,338.9C664.2,338.9 665.9,332.5 667.6,332.5C669.0,332.5 670.5,335.2 671.9,335.2C673.6,335.2 675.3,334.6 676.9,334.2C679.2,333.6 681.5,331.8 683.7,331.8C686.0,331.8 688.2,336.4 690.5,336.4C692.2,336.4 693.9,336.4 695.6,336.4C697.3,336.4 699.0,333.8 700.7,333.8C702.1,333.8 703.5,334.5 704.9,335.2C706.2,335.8 707.5,339.2 708.8,339.2C710.1,339.2 711.3,330.1 712.5,330.1C714.5,330.1 716.5,334.7 718.5,334.7C720.5,334.7 722.4,333.8 724.4,333.8C726.0,333.8 727.6,341.9 729.2,341.9C730.4,341.9 731.6,338.6 732.9,338.6C734.3,338.6 735.7,343.1 737.1,343.1C738.5,343.1 739.9,343.1 741.4,343.1C742.8,343.1 744.2,333.0 745.6,333.0C747.0,333.0 748.4,345.7 749.8,345.7C751.2,345.7 752.7,331.8 754.1,331.8C755.4,331.8 756.7,339.0 758.1,339.0C759.4,339.0 760.8,332.2 762.1,332.2C763.6,332.2 765.1,342.4 766.5,342.4C769.5,342.4 772.4,336.9 775.3,336.9C777.6,336.9 779.9,344.4 782.1,344.4C784.9,344.4 787.8,333.1 790.6,333.1C792.9,333.1 795.1,338.6 797.4,338.6C799.4,338.6 801.3,332.2 803.3,332.2C804.7,332.2 806.1,335.3 807.5,335.3C809.0,335.3 810.4,332.5 811.8,332.5C813.5,332.5 815.2,337.3 816.9,337.3C818.8,337.3 820.8,337.1 822.8,336.9C825.9,336.6 829.0,332.5 832.1,332.5C833.5,332.5 834.9,336.4 836.4,336.4C837.8,336.4 839.2,330.2 840.6,330.2C843.1,330.2 845.7,343.7 848.2,343.7C849.9,343.7 851.6,332.2 853.3,332.2C855.8,332.2 858.4,342.4 860.9,342.4C862.6,342.4 864.3,335.6 866.0,335.6C868.6,335.6 871.1,342.0 873.6,342.0C874.8,342.0 875.9,341.1 877.0,339.8C878.6,338.1 880.2,311.5 881.8,311.5C883.3,311.5 884.8,331.3 886.4,333.9C888.1,336.7 889.7,336.9 891.4,339.0C892.4,340.1 893.4,343.2 894.3,343.2C897.5,343.2 900.6,329.0 903.8,329.0C905.4,329.0 907.1,335.1 908.8,336.5C910.2,337.7 911.6,339.0 913.0,339.0C914.3,339.0 915.7,336.9 917.0,336.6C918.7,336.3 920.3,336.0 922.0,336.0C923.3,336.0 924.7,339.0 926.0,339.0C927.3,339.0 928.7,336.8 930.0,336.4C931.2,336.0 932.5,335.6 933.8,335.6C935.2,335.6 936.6,337.0 938.0,337.0C939.5,337.0 941.0,335.4 942.5,334.4C943.3,333.8 944.2,332.5 945.0,332.5C946.0,332.5 947.0,336.0 948.0,336.0C950.5,336.0 953.1,326.9 955.6,326.9C957.1,326.9 958.5,335.8 960.0,337.0C961.7,338.4 963.3,339.5 965.0,339.5C967.0,339.5 969.0,336.4 971.0,336.4C972.7,336.4 974.3,339.0 976.0,339.0C977.7,339.0 979.3,336.2 981.0,336.2C982.7,336.2 984.3,339.0 986.0,339.0C987.3,339.0 988.7,337.8 990.0,336.6C991.2,335.5 992.5,330.0 993.8,330.0C995.0,330.0 996.2,336.6 997.5,336.6C999.6,336.6 1001.7,336.2 1003.8,335.6C1004.8,335.3 1005.9,332.0 1006.9,332.0C1007.9,332.0 1009.0,336.6 1010.0,336.6C1011.7,336.6 1013.3,336.4 1015.0,336.0C1016.0,335.7 1017.0,323.0 1018.0,323.0C1019.0,323.0 1020.0,336.8 1021.0,336.8C1022.3,336.8 1023.7,335.1 1025.0,333.8C1025.7,333.1 1026.3,331.0 1027.0,331.0C1028.3,331.0 1029.7,332.7 1031.0,333.5C1032.7,334.5 1034.3,335.6 1036.0,336.6C1037.3,337.4 1038.7,339.0 1040.0,339.0C1042.0,339.0 1044.0,337.7 1046.0,336.5C1047.7,335.5 1049.3,332.0 1051.0,332.0C1052.0,332.0 1053.0,336.0 1054.0,337.0C1056.0,339.0 1058.0,341.0 1060.0,341.0C1062.5,341.0 1065.0,317.5 1067.5,317.5C1069.0,317.5 1070.5,329.6 1071.9,332.2C1074.5,336.7 1077.0,341.0 1079.6,341.0C1081.0,341.0 1082.4,337.6 1083.8,337.6C1085.2,337.6 1086.6,344.9 1088.1,344.9C1089.5,344.9 1090.9,344.1 1092.3,343.2C1093.7,342.3 1095.1,335.6 1096.5,335.6C1097.7,335.6 1098.8,336.4 1099.9,336.4C1101.4,336.4 1103.0,329.7 1104.5,329.7C1106.0,329.7 1107.4,343.7 1108.9,343.7C1110.1,343.7 1111.4,340.8 1112.6,339.0C1114.0,336.9 1115.5,331.4 1116.9,331.4C1118.3,331.4 1119.7,334.1 1121.1,335.9C1122.4,337.6 1123.7,342.4 1125.0,342.4C1126.4,342.4 1127.8,334.2 1129.2,334.2C1130.6,334.2 1131.9,341.0 1133.3,341.0C1136.0,341.0 1138.7,338.6 1141.4,338.6C1142.9,338.6 1144.3,344.9 1145.7,344.9C1148.2,344.9 1150.8,330.5 1153.3,330.5C1154.9,330.5 1156.5,332.2 1158.1,332.2C1159.6,332.2 1161.1,325.8 1162.6,325.8C1164.0,325.8 1165.5,326.9 1166.9,328.0C1168.3,329.0 1169.7,333.6 1171.1,333.6C1172.4,333.6 1173.7,324.6 1175.0,324.6C1176.4,324.6 1177.7,339.8 1179.1,339.8C1180.5,339.8 1181.9,328.5 1183.3,328.5C1185.9,328.5 1188.4,329.8 1191.0,331.9C1192.5,333.2 1193.9,344.8 1195.4,344.8C1198.2,344.8 1201.1,324.8 1203.9,324.8C1205.3,324.8 1206.7,330.2 1208.1,334.2C1209.4,338.0 1210.6,350.0 1211.9,350.0C1213.3,350.0 1214.6,337.4 1216.0,335.4C1217.4,333.3 1218.9,331.5 1220.3,331.5C1221.8,331.5 1223.2,334.5 1224.6,334.5C1225.9,334.5 1227.2,332.8 1228.5,332.8C1229.9,332.8 1231.3,338.6 1232.7,338.6C1234.2,338.6 1235.7,336.9 1237.2,335.6C1238.4,334.6 1239.6,331.5 1240.8,331.5C1242.2,331.5 1243.6,335.4 1244.9,335.4C1247.3,335.4 1249.6,329.5 1252.0,329.5C1253.6,329.5 1255.3,343.9 1256.9,343.9C1258.5,343.9 1260.1,342.0 1261.7,340.4C1263.0,339.0 1264.4,334.2 1265.7,334.2C1267.0,334.2 1268.3,341.3 1269.6,341.3C1271.0,341.3 1272.5,341.3 1274.0,341.3C1275.4,341.3 1276.9,332.5 1278.3,332.5C1279.8,332.5 1281.3,335.1 1282.7,335.1C1285.1,335.1 1287.4,334.8 1289.8,334.8C1291.2,334.8 1292.7,342.5 1294.2,342.5C1296.8,342.5 1299.4,336.0 1302.1,336.0C1305.0,336.0 1307.9,345.3 1310.8,345.3C1313.5,345.3 1316.1,333.4 1318.7,333.4C1321.1,333.4 1323.4,336.0 1325.8,337.8C1327.6,339.2 1329.5,343.0 1331.4,343.0C1332.7,343.0 1334.1,338.3 1335.4,338.3C1336.6,338.3 1337.8,338.8 1338.9,339.0" stroke="#3075ee"/><path d="M369.8,650.3 H1339.5" stroke="#ee3f6c" stroke-width="1.5"/></g><path d="M894.4,291 V651.6" stroke="#c9c9c9" stroke-width="1.6" stroke-dasharray="6.5,7" stroke-dashoffset="-1.5"/><circle cx="894.3" cy="342.9" r="5.5" fill="#fff"/><circle cx="894.3" cy="342.9" r="3.6" fill="#3075ee"/><circle cx="894.3" cy="368.3" r="5.5" fill="#fff"/><circle cx="894.3" cy="368.3" r="3.6" fill="#fdb95a"/><circle cx="894.3" cy="554.5" r="5.5" fill="#fff"/><circle cx="894.3" cy="554.5" r="3.6" fill="#3cdac5"/><circle cx="894.3" cy="619.4" r="5.5" fill="#fff"/><circle cx="894.3" cy="619.4" r="3.6" fill="#9f6aea"/><circle cx="894.3" cy="650.4" r="5.5" fill="#fff"/><circle cx="894.3" cy="650.4" r="3.6" fill="#ee3f6c"/></svg>
<span class="t" style="left:328.88px;top:284.00px;font-size:14.00px;line-height:14.00px;font-weight:normal;color:#555560;">200</span>
<span class="t" style="left:328.88px;top:374.00px;font-size:14.00px;line-height:14.00px;font-weight:normal;color:#555560;">150</span>
<span class="t" style="left:328.88px;top:464.00px;font-size:14.00px;line-height:14.00px;font-weight:normal;color:#555560;">100</span>
<span class="t" style="left:336.58px;top:554.00px;font-size:14.00px;line-height:14.00px;font-weight:normal;color:#555560;">50</span>
<span class="t" style="left:344.42px;top:645.00px;font-size:14.00px;line-height:14.00px;font-weight:normal;color:#555560;">0</span>
<div class="b" style="left:285.4px;top:471px;width:0;height:0;"><span class="t" style="left:0;top:0;font-size:14px;line-height:14px;color:#7a82b8;transform:translate(-50%,-50%) rotate(-90deg) scaleX(1.1333);transform-origin:50% 50%;">Time (milliseconds)</span></div>
<span class="t" style="left:365.15px;top:664.00px;font-size:11.30px;line-height:11.30px;font-weight:normal;color:#7c83b3;transform:scaleX(0.9939);">07/06 09:28</span>
<span class="t" style="left:455.85px;top:664.00px;font-size:11.30px;line-height:11.30px;font-weight:normal;color:#7c83b3;">07/06 09:34</span>
<span class="t" style="left:546.55px;top:664.00px;font-size:11.30px;line-height:11.30px;font-weight:normal;color:#7c83b3;transform:scaleX(0.9871);">07/06 09:39</span>
<span class="t" style="left:637.05px;top:664.00px;font-size:11.30px;line-height:11.30px;font-weight:normal;color:#7c83b3;transform:scaleX(0.9937);">07/06 09:45</span>
<span class="t" style="left:733.57px;top:664.00px;font-size:11.30px;line-height:11.30px;font-weight:normal;color:#7c83b3;transform:scaleX(0.9530);">07/06 09:51</span>
<span class="t" style="left:828.07px;top:664.00px;font-size:11.30px;line-height:11.30px;font-weight:normal;color:#7c83b3;transform:scaleX(0.9615);">07/06 09:56</span>
<span class="t" style="left:920.18px;top:664.00px;font-size:11.30px;line-height:11.30px;font-weight:normal;color:#7c83b3;transform:scaleX(0.9241);">07/06 10:02</span>
<span class="t" style="left:1011.18px;top:664.00px;font-size:11.30px;line-height:11.30px;font-weight:normal;color:#7c83b3;transform:scaleX(0.9258);">07/06 10:07</span>
<span class="t" style="left:1103.10px;top:664.00px;font-size:11.30px;line-height:11.30px;font-weight:normal;color:#7c83b3;transform:scaleX(0.8764);">07/06 10:13</span>
<span class="t" style="left:1197.90px;top:664.00px;font-size:11.30px;line-height:11.30px;font-weight:normal;color:#7c83b3;transform:scaleX(0.8918);">07/06 10:19</span>
<span class="t" style="left:1289.58px;top:664.00px;font-size:11.30px;line-height:11.30px;font-weight:normal;color:#7c83b3;transform:scaleX(0.9190);">07/06 10:26</span>
<span class="t" style="left:728.86px;top:706.00px;font-size:12.60px;line-height:12.60px;font-weight:normal;color:#22309a;transform:scaleX(1.0365);">Each value represents 15 seconds</span>
<div class="b" style="left:1361.50px;top:279.80px;width:152.50px;height:27.00px;background:#fff;border-radius:6px;box-shadow:0 10px 40px rgba(110,110,245,0.20);"></div>
<span class="t" style="left:1369.45px;top:288.00px;font-size:12.80px;line-height:12.80px;font-weight:normal;color:#1a1a2e;transform:scaleX(1.0210);">Line Chart</span>
<svg class="b" style="left:0;top:0" width="1600" height="826" viewBox="0 0 1600 826"><path d="M1495.3,291.3 L1499.3,295.3 L1503.3,291.3" fill="none" stroke="#1a1a2e" stroke-width="1.3" stroke-linecap="round" stroke-linejoin="round"/></svg>
<div class="b" style="left:1369.30px;top:409.80px;width:10.40px;height:10.40px;background:#ee3f6c;border-radius:50%;"></div>
<span class="t" style="left:1392.37px;top:409.00px;font-size:13.20px;line-height:13.20px;font-weight:normal;color:#22222e;transform:scaleX(0.9771);">Noise-R-US</span>
<div class="b" style="left:1369.30px;top:435.20px;width:10.40px;height:10.40px;background:#3075ee;border-radius:50%;"></div>
<span class="t" style="left:1393.40px;top:434.00px;font-size:13.20px;line-height:13.20px;font-weight:normal;color:#22222e;transform:scaleX(1.0454);">Virtucon</span>
<div class="b" style="left:1369.30px;top:460.60px;width:10.40px;height:10.40px;background:#9f6aea;border-radius:50%;"></div>
<span class="t" style="left:1392.75px;top:459.00px;font-size:13.20px;line-height:13.20px;font-weight:normal;color:#22222e;transform:scaleX(0.9813);">Genesis</span>
<div class="b" style="left:1369.30px;top:486.10px;width:10.40px;height:10.40px;background:#3cdac5;border-radius:50%;"></div>
<span class="t" style="left:1392.36px;top:485.00px;font-size:13.20px;line-height:13.20px;font-weight:normal;color:#22222e;transform:scaleX(0.9827);">Braze</span>
<div class="b" style="left:1369.30px;top:511.60px;width:10.40px;height:10.40px;background:#fdb95a;border-radius:50%;"></div>
<span class="t" style="left:1392.38px;top:511.00px;font-size:13.20px;line-height:13.20px;font-weight:normal;color:#22222e;transform:scaleX(0.9704);">Fuse</span>
<div class="b" style="left:903.00px;top:336.50px;width:157.70px;height:184.40px;background:#fff;border-radius:9px;box-shadow:0 9px 18px rgba(90,90,255,0.38);"></div>
<span class="t" style="left:916.03px;top:352.00px;font-size:11.00px;line-height:11.00px;font-weight:normal;color:#a0a5c8;transform:scaleX(1.0639);">07/06/2023 09:59:00</span>
<span class="t" style="left:915.79px;top:377.00px;font-size:12.50px;line-height:12.50px;font-weight:bold;color:#111;transform:scaleX(0.9508);">1ms</span>
<div class="b" style="left:964.50px;top:376.70px;width:10.40px;height:10.40px;background:#ee3f6c;border-radius:50%;"></div>
<span class="t" style="left:981.20px;top:376.00px;font-size:13.00px;line-height:13.00px;font-weight:normal;color:#383844;transform:scaleX(0.9597);">Noise-R-US</span>
<span class="t" style="left:915.83px;top:406.00px;font-size:12.50px;line-height:12.50px;font-weight:bold;color:#111;transform:scaleX(0.8874);">171ms</span>
<div class="b" style="left:964.50px;top:405.40px;width:10.40px;height:10.40px;background:#3075ee;border-radius:50%;"></div>
<span class="t" style="left:982.20px;top:405.00px;font-size:13.00px;line-height:13.00px;font-weight:normal;color:#383844;transform:scaleX(1.0314);">Virtucon</span>
<span class="t" style="left:915.76px;top:435.00px;font-size:12.50px;line-height:12.50px;font-weight:bold;color:#111;transform:scaleX(0.9919);">18ms</span>
<div class="b" style="left:964.50px;top:434.10px;width:10.40px;height:10.40px;background:#9f6aea;border-radius:50%;"></div>
<span class="t" style="left:981.57px;top:434.00px;font-size:13.00px;line-height:13.00px;font-weight:normal;color:#383844;transform:scaleX(0.9621);">Genesis</span>
<span class="t" style="left:916.09px;top:464.00px;font-size:12.50px;line-height:12.50px;font-weight:bold;color:#111;transform:scaleX(1.1052);">54ms</span>
<div class="b" style="left:964.50px;top:463.00px;width:10.40px;height:10.40px;background:#3cdac5;border-radius:50%;"></div>
<span class="t" style="left:981.21px;top:463.00px;font-size:13.00px;line-height:13.00px;font-weight:normal;color:#383844;transform:scaleX(0.9484);">Braze</span>
<span class="t" style="left:915.77px;top:492.00px;font-size:12.50px;line-height:12.50px;font-weight:bold;color:#111;transform:scaleX(0.9775);">157ms</span>
<div class="b" style="left:964.50px;top:491.60px;width:10.40px;height:10.40px;background:#fdb95a;border-radius:50%;"></div>
<span class="t" style="left:981.22px;top:491.00px;font-size:13.00px;line-height:13.00px;font-weight:normal;color:#383844;transform:scaleX(0.9377);">Fuse</span>
<div class="b" style="left:250.00px;top:766.00px;width:1324.00px;height:56.60px;background:#fff;border-radius:9px 9px 0 0;"></div>
<span class="t" style="left:270.74px;top:798.00px;font-size:19.80px;line-height:19.80px;font-weight:normal;color:#0d0d1a;transform:scaleX(1.1711);">Tenants</span>
<div class="b" style="left:385.30px;top:789.20px;width:35.10px;height:40.80px;background:#fff;border:1px solid #e2e2fd;border-radius:7px;box-sizing:border-box;"></div>
<svg class="b" style="left:0;top:0" width="1600" height="826" viewBox="0 0 1600 826"><g fill="none" stroke="#2a2a55" stroke-width="1.2" stroke-linejoin="round" stroke-linecap="round"><path d="M402.9,815.3 H397.8 Q396.2,815.3 396.2,813.7 V798.2 Q396.2,796.8 397.8,796.8 H405.5 L410.2,801.2 V806.7"/><path d="M405.3,797 V800.3 Q405.3,801.3 406.3,801.3 H410"/></g><text x="402.8" y="809" font-family="Liberation Sans" font-size="4.4" font-weight="bold" fill="#2a2a55" text-anchor="middle">CSV</text><circle cx="410" cy="814.2" r="4.6" fill="#0d0d2e"/><path d="M410,811.4 V816.4 M408.2,814.6 L410,816.5 L411.8,814.6" stroke="#fff" stroke-width="1.1" fill="none"/></svg>
<span class="t" style="left:454.23px;top:801.00px;font-size:13.50px;line-height:13.50px;font-weight:normal;color:#2d3be8;">Top 5</span>
<span class="t" style="left:520.22px;top:801.00px;font-size:13.50px;line-height:13.50px;font-weight:normal;color:#2d3be8;">Deselect all</span>
<div class="b" style="left:0.00px;top:822.60px;width:1600.00px;height:3.40px;background:#fff;"></div>
</body></html>
